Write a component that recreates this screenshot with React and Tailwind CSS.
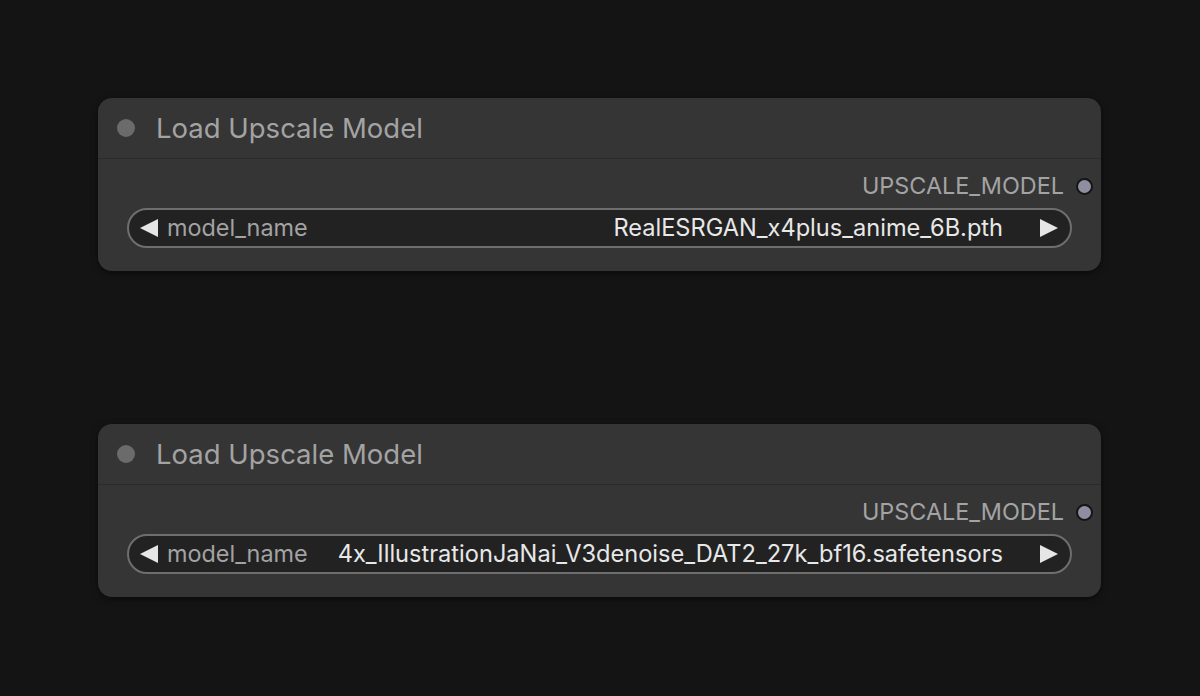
import React from "react";

function Arrow({ dir }) {
  return (
    <svg width="20" height="20" viewBox="0 0 20 20" className="shrink-0">
      {dir === "left" ? (
        <polygon points="19,1 19,19 1,10" fill="#e6e6e6" />
      ) : (
        <polygon points="1,1 1,19 19,10" fill="#e6e6e6" />
      )}
    </svg>
  );
}

function Node({ value }) {
  return (
    <div className="h-[173px] w-[1003px] rounded-[14px] bg-[#353535] shadow-[0_2px_6px_rgba(0,0,0,0.5)]">
      <div className="flex h-[61px] items-center border-b border-[#2b2b2b] pl-[19px] pt-[2px]">
        <div className="mt-[-2px] h-[18px] w-[18px] rounded-full bg-[#6b6b6b]" />
        <span className="ml-[21px] text-[27.5px] text-[#a3a3a3]">Load Upscale Model</span>
      </div>
      <div className="px-[29px] pt-[14px]">
        <div className="flex h-[26px] items-center justify-end">
          <span className="text-[23.4px] text-[#a3a3a3]">UPSCALE_MODEL</span>
          <div className="ml-[12px] mr-[-21px] h-[17px] w-[17px] rounded-full border-2 border-[#151515] bg-[#8e8ea0]" />
        </div>
        <div className="mt-[9px] flex h-[40px] items-center rounded-full border-2 border-[#6e6e6e] bg-[#222222] pl-[10px] pr-[11px]">
          <Arrow dir="left" />
          <span className="ml-[8px] text-[23.4px] text-[#a3a3a3]">model_name</span>
          <span className="ml-auto text-[23.6px] text-[#e8e8e8]">{value}</span>
          <span className="ml-[36px]">
            <Arrow dir="right" />
          </span>
        </div>
      </div>
    </div>
  );
}

export default function App() {
  return (
    <div
      className="flex h-[696px] w-[1200px] flex-col items-start bg-[#141414] pl-[98px] pt-[98px]"
      style={{ fontFamily: "Inter, 'Noto Sans', sans-serif" }}
    >
      <Node value="RealESRGAN_x4plus_anime_6B.pth" />
      <div className="h-[153px] shrink-0" />
      <Node value="4x_IllustrationJaNai_V3denoise_DAT2_27k_bf16.safetensors" />
    </div>
  );
}
